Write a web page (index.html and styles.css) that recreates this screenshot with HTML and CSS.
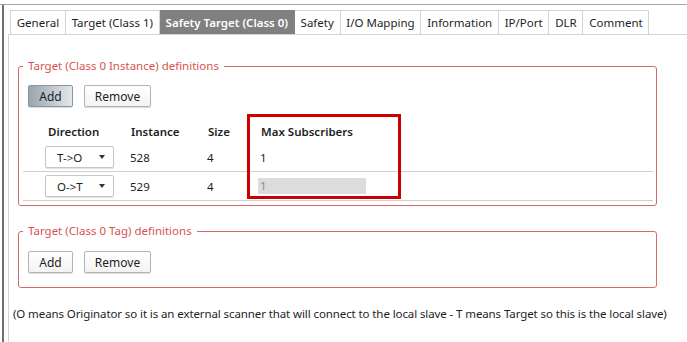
FILE: index.html
```html
<!DOCTYPE html>
<html lang="en">
<head>
    <meta charset="UTF-8">
    <title>Safety Target (Class 0)</title>
    <link rel="stylesheet" href="styles.css">
</head>
<body>
    <div class="window">
        <div class="frame">
            <div class="tabs">
                <div class="tab">General</div>
                <div class="tab">Target (Class 1)</div>
                <div class="tab tab-active">Safety Target (Class 0)</div>
                <div class="tab">Safety</div>
                <div class="tab">I/O Mapping</div>
                <div class="tab">Information</div>
                <div class="tab">IP/Port</div>
                <div class="tab">DLR</div>
                <div class="tab">Comment</div>
            </div>

            <div class="panel">
                <fieldset class="group">
                    <legend>Target (Class 0 Instance) definitions</legend>
                    <div class="buttons">
                        <button class="btn btn-pressed">Add</button>
                        <button class="btn btn-wide">Remove</button>
                    </div>

                    <div class="grid">
                        <div class="row row-head">
                            <div class="c-dir head-dir">Direction</div>
                            <div class="c-inst">Instance</div>
                            <div class="c-size">Size</div>
                            <div class="c-max">Max Subscribers</div>
                        </div>
                        <div class="row">
                            <div class="c-dir">
                                <div class="select"><span>T-&gt;O</span><span class="arrow"></span></div>
                            </div>
                            <div class="c-inst">528</div>
                            <div class="c-size">4</div>
                            <div class="c-max">1</div>
                        </div>
                        <div class="row">
                            <div class="c-dir">
                                <div class="select"><span>O-&gt;T</span><span class="arrow"></span></div>
                            </div>
                            <div class="c-inst">529</div>
                            <div class="c-size">4</div>
                            <div class="c-max"><div class="cell-edit">1</div></div>
                        </div>
                        <div class="highlight"></div>
                    </div>
                </fieldset>

                <fieldset class="group group-tag">
                    <legend>Target (Class 0 Tag) definitions</legend>
                    <div class="buttons">
                        <button class="btn">Add</button>
                        <button class="btn btn-wide">Remove</button>
                    </div>
                </fieldset>

                <p class="note">(O means Originator so it is an external scanner that will connect to the local slave - T means Target so this is the local slave)</p>
            </div>
        </div>
    </div>
</body>
</html>
```

FILE: styles.css
```css
body {
    margin: 0;
    font-family: "Noto Sans", sans-serif;
    font-size: 11.5px;
    color: #1e1e1e;
    background: #fff;
    overflow: hidden;
}

.window {
    margin-top: 4px;
    border-top: 1px solid #a6a6a6;
    height: 337px;
}

.frame {
    display: flex;
    flex-direction: column;
    margin-left: 2px;
    border-left: 2px solid #6e6e6e;
    height: 100%;
}

/* tab strip */
.tabs {
    display: flex;
    padding: 5px 0 0 6px;
}

.tab {
    height: 23px;
    line-height: 23px;
    padding: 0 5.75px;
    border: 1px solid #d4d4d4;
    border-bottom: none;
    border-left: none;
    white-space: nowrap;
}

.tab:first-child {
    border-left: 1px solid #d4d4d4;
}

.tab-active {
    background-color: #808080;
    border-color: #808080;
    color: #fff;
    font-weight: 600;
}

.panel {
    flex: 1;
    margin-left: 4px;
    border-top: 1px solid #d4d4d4;
    border-left: 1px solid #d4d4d4;
}

/* group boxes */
.group {
    margin: 23px 30px 0 9px;
    padding: 0 3px 4px 4px;
    border: 1px solid #d46a6a;
    border-radius: 3px;
    min-width: 0;
}

.group legend {
    padding: 0 5px;
    line-height: 16px;
    color: #d9534f;
}

.group-tag {
    margin-top: 17px;
    padding-bottom: 0;
}

.buttons {
    display: flex;
    gap: 11px;
    margin: 11px 0 13px 5px;
}

.group-tag .buttons {
    margin-top: 12px;
    margin-bottom: 14px;
}

.btn {
    width: 45px;
    height: 22px;
    padding: 0;
    font-family: inherit;
    font-size: 12px;
    color: #1e1e1e;
    background: linear-gradient(#ffffff, #f3f3f3);
    border: 1px solid #b4b4b4;
    border-radius: 2px;
    box-shadow: 0 1px 1px rgba(0, 0, 0, 0.15);
}

.btn-wide {
    width: 67px;
}

.btn-pressed {
    background: linear-gradient(to right, #98a4b0, #e4e8eb);
    border-color: #8a949e;
}

/* table */
.grid {
    position: relative;
}

.row {
    display: flex;
    align-items: center;
    height: 28px;
    padding-left: 22px;
    border-bottom: 1px solid #cfcfcf;
}

.row-head {
    height: 23px;
    border-bottom: none;
    font-weight: 600;
}

.c-dir {
    width: 85px;
}

.head-dir {
    padding-left: 3px;
}

.c-inst {
    width: 77px;
}

.c-size {
    width: 53px;
}

.c-max {
    flex: 1;
}

.row-head .c-inst,
.row-head .c-size,
.row-head .c-max {
    margin-left: -2px;
    margin-right: 2px;
}

.select {
    display: flex;
    align-items: center;
    box-sizing: border-box;
    width: 69px;
    height: 22px;
    padding-left: 11px;
    border: 1px solid #c6c6c6;
    border-radius: 2px;
    box-shadow: 0 1px 1px rgba(0, 0, 0, 0.12);
}

.arrow {
    margin-left: auto;
    margin-right: 8px;
    border-left: 3.5px solid transparent;
    border-right: 3.5px solid transparent;
    border-top: 4px solid #333;
}

.cell-edit {
    width: 106px;
    height: 16px;
    line-height: 16px;
    margin-left: -2px;
    padding-left: 2px;
    background-color: #dcdcdc;
    color: #8a8a8a;
}

.highlight {
    position: absolute;
    left: 224px;
    top: -6px;
    width: 154px;
    height: 85px;
    box-sizing: border-box;
    border: 3px solid #cc0000;
}

.note {
    margin: 18px 0 0 4px;
    line-height: 16px;
    letter-spacing: -0.1px;
    white-space: nowrap;
}
```
